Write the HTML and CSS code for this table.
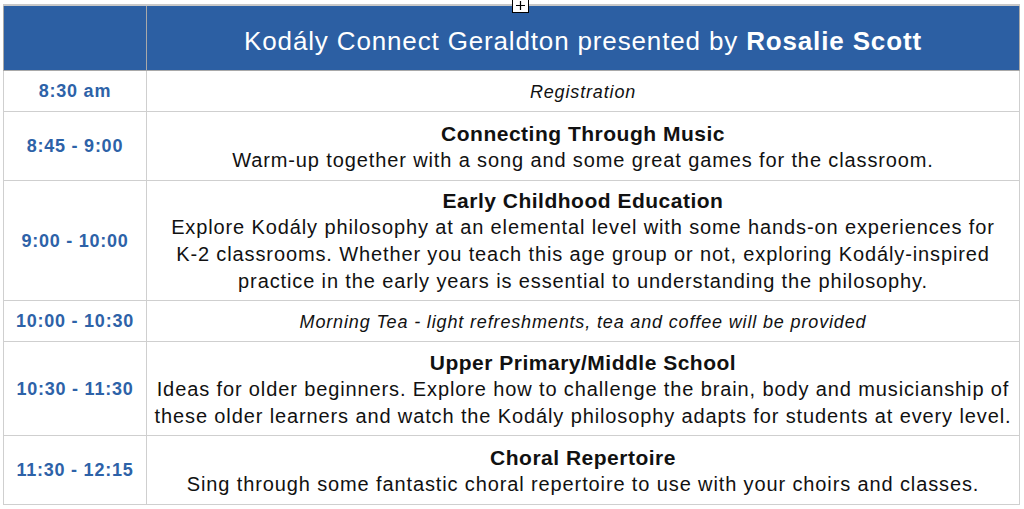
FILE: index.html
```html
<!DOCTYPE html>
<html lang="en">
<head>
  <meta charset="UTF-8">
  <meta name="viewport" content="width=device-width, initial-scale=1.0">
  <title>Kodály Connect Geraldton</title>
  <link rel="stylesheet" href="styles.css">
</head>
<body>
  <div class="wrap">
    <svg class="handle" width="17" height="15" viewBox="0 0 17 15">
      <rect x="0.5" y="0.5" width="16" height="14" fill="#fff" stroke="#000"/>
      <path d="M8.5 3v9M4 7.5h9" stroke="#000" stroke-width="1.2"/>
    </svg>
    <table class="schedule">
      <tr class="head">
        <th class="time"></th>
        <th>Kodály Connect Geraldton presented by <b>Rosalie Scott</b></th>
      </tr>
      <tr class="short">
        <td class="time">8:30 am</td>
        <td class="note">Registration</td>
      </tr>
      <tr class="two">
        <td class="time">8:45 - 9:00</td>
        <td><div class="title">Connecting Through Music</div>Warm-up together with a song and some great games for the classroom.</td>
      </tr>
      <tr>
        <td class="time">9:00 - 10:00</td>
        <td><div class="title">Early Childhood Education</div>Explore Kodály philosophy at an elemental level with some hands-on experiences for<br>K-2 classrooms. Whether you teach this age group or not, exploring Kodály-inspired<br>practice in the early years is essential to understanding the philosophy.</td>
      </tr>
      <tr class="short">
        <td class="time">10:00 - 10:30</td>
        <td class="note">Morning Tea - light refreshments, tea and coffee will be provided</td>
      </tr>
      <tr class="three">
        <td class="time">10:30 - 11:30</td>
        <td><div class="title">Upper Primary/Middle School</div>Ideas for older beginners. Explore how to challenge the brain, body and musicianship of<br>these older learners and watch the Kodály philosophy adapts for students at every level.</td>
      </tr>
      <tr class="two">
        <td class="time">11:30 - 12:15</td>
        <td><div class="title">Choral Repertoire</div>Sing through some fantastic choral repertoire to use with your choirs and classes.</td>
      </tr>
    </table>
  </div>
</body>
</html>
```

FILE: styles.css
```css
body {
  margin: 0;
  background: #fff;
  font-family: "Liberation Sans", Arial, sans-serif;
  color: #111;
}
.wrap {
  position: relative;
  padding: 4px 4px 0 3px;
}
.handle {
  position: absolute;
  left: 512px;
  top: -2px;
  z-index: 2;
}
.schedule {
  width: 1017px;
  border-collapse: collapse;
  border-top: 2px solid #c8c8c8;
}
.schedule th, .schedule td {
  border: 1px solid #cfcfcf;
  text-align: center;
  vertical-align: middle;
  padding: 6px 2px 5px;
}
.head th {
  background: #2c5fa3;
  color: #fff;
  font-size: 26px;
  letter-spacing: 0.85px;
  font-weight: normal;
  height: 53px;
  padding: 9px 2px 2px;
  border-color: #a9a9a9;
  border-top: none;
}
.head th b {
  font-weight: bold;
}
.schedule .time {
  width: 138px;
  color: #2d62a8;
  font-weight: bold;
  font-size: 18px;
  letter-spacing: 0.75px;
  white-space: nowrap;
}
.schedule td {
  font-size: 20px;
  letter-spacing: 0.88px;
  line-height: 27px;
  white-space: nowrap;
}
.schedule .note {
  font-style: italic;
  font-size: 18px;
  letter-spacing: 0.85px;
  line-height: 20px;
}
.short {
  height: 41px;
}
.two {
  height: 69px;
}
.three {
  height: 94px;
}
.title {
  font-weight: bold;
  font-size: 21px;
  letter-spacing: 0.5px;
}
```
